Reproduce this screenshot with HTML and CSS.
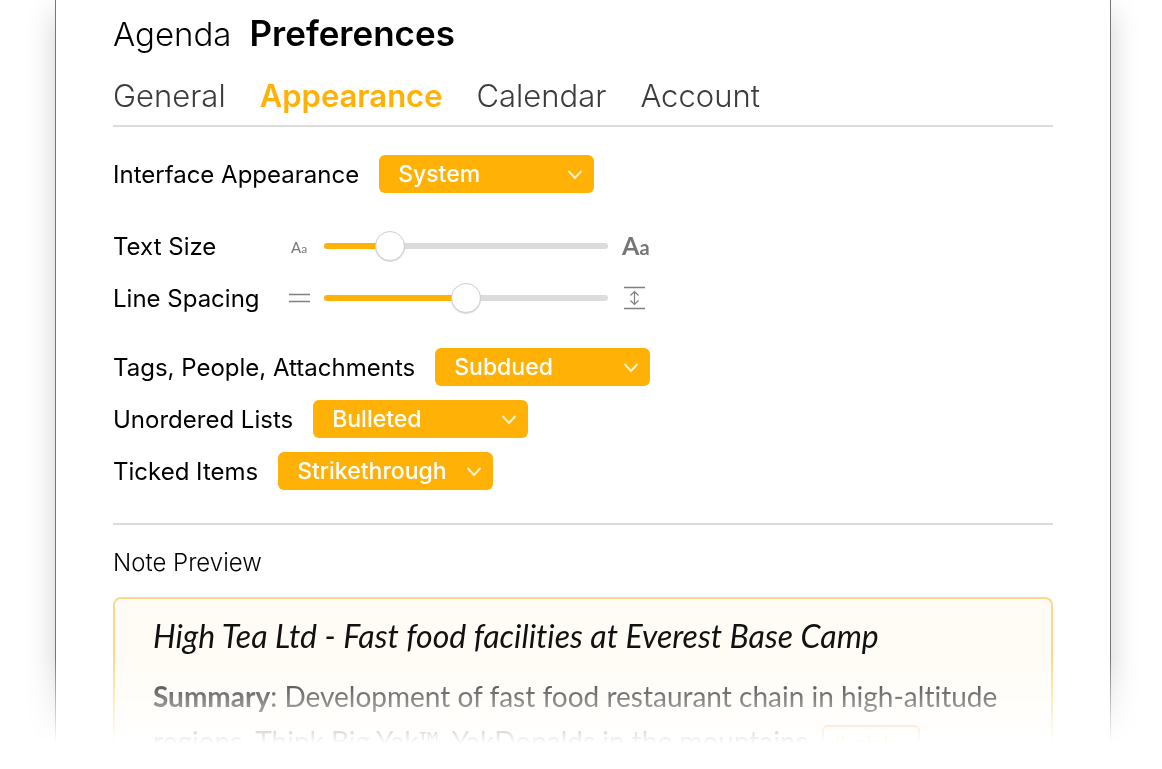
FILE: index.html
```html
<!DOCTYPE html>
<html lang="en">
<head>
<meta charset="utf-8">
<title>Agenda Preferences</title>
<link rel="stylesheet" href="styles.css">
</head>
<body>
<div class="stage">
  <main class="window">
    <h1 class="title"><span class="title-app">Agenda</span> <span class="title-page">Preferences</span></h1>
    <nav class="tabs">
      <a class="tab" href="#general">General</a>
      <a class="tab tab-active" href="#appearance" aria-current="page">Appearance</a>
      <a class="tab" href="#calendar">Calendar</a>
      <a class="tab" href="#account">Account</a>
    </nav>

    <form class="settings">
      <div class="group">
        <div class="row">
          <label for="interface">Interface Appearance</label>
          <span class="picker">
            <select id="interface"><option>System</option><option>Light</option><option>Dark</option></select>
            <svg class="chevron" viewBox="0 0 16 10" aria-hidden="true"><path d="M2 1.5 8 8l6-6.5"/></svg>
          </span>
        </div>
      </div>

      <div class="group group-sliders">
        <div class="row slider-row">
          <label for="size">Text Size</label>
          <span class="hint hint-small" aria-hidden="true"><span class="cap">A</span>a</span>
          <input id="size" type="range" min="0" max="100" value="20" style="--fill: 20%">
          <span class="hint hint-large" aria-hidden="true"><span class="cap">A</span>a</span>
        </div>
        <div class="row slider-row">
          <label for="spacing">Line Spacing</label>
          <svg class="icon" viewBox="0 0 22 26" aria-hidden="true"><path class="medium" d="M1 9.5h21M1 16.5h21"/></svg>
          <input id="spacing" type="range" min="0" max="100" value="50" style="--fill: 50%">
          <svg class="icon" viewBox="0 0 22 26" aria-hidden="true"><path class="thick" d="M2 2.5h21M2 23.5h21"/><path class="thin" d="M12.5 6.5v13M8.5 10.5l4-4 4 4M8.5 15.5l4 4 4-4"/></svg>
        </div>
      </div>

      <div class="group">
        <div class="row">
          <label for="tags">Tags, People, Attachments</label>
          <span class="picker">
            <select id="tags"><option>Subdued</option><option>Vivid</option></select>
            <svg class="chevron" viewBox="0 0 16 10" aria-hidden="true"><path d="M2 1.5 8 8l6-6.5"/></svg>
          </span>
        </div>
        <div class="row">
          <label for="lists">Unordered Lists</label>
          <span class="picker">
            <select id="lists"><option>Bulleted</option><option>Dashed</option></select>
            <svg class="chevron" viewBox="0 0 16 10" aria-hidden="true"><path d="M2 1.5 8 8l6-6.5"/></svg>
          </span>
        </div>
        <div class="row">
          <label for="ticked">Ticked Items</label>
          <span class="picker">
            <select id="ticked"><option>Strikethrough</option><option>Plain</option></select>
            <svg class="chevron" viewBox="0 0 16 10" aria-hidden="true"><path d="M2 1.5 8 8l6-6.5"/></svg>
          </span>
        </div>
      </div>
    </form>

    <section class="preview">
      <h2 class="preview-label">Note Preview</h2>
      <article class="note">
        <h3 class="note-title">High Tea Ltd - Fast food facilities at Everest Base Camp</h3>
        <p class="note-text"><strong>Summary</strong>: Development of fast food restaurant chain in high-altitude regions. Think Big Yak™, YakDonalds in the mountains. <span class="tag"># niche</span></p>
      </article>
    </section>
  </main>
</div>
</body>
</html>
```
FILE: styles.css
```css
* { box-sizing: border-box; }

body {
  margin: 0;
  background: #fff;
  color: #000;
  font-family: Inter, "Liberation Sans", sans-serif;
}

/* The window fades out towards the bottom of the stage. */
.stage {
  padding: 0 51px 0 55px;
  overflow: hidden;
  -webkit-mask-image: linear-gradient(#000 calc(100% - 86px), transparent);
  mask-image: linear-gradient(#000 calc(100% - 86px), transparent);
}

.window {
  padding: 11px 57px 0;
  border: solid #777;
  border-width: 0 1px;
  background: #fff;
  box-shadow: 0 12px 28px rgba(0, 0, 0, 0.18);
}

.title {
  display: flex;
  align-items: baseline;
  gap: 18px;
  margin: 0;
  font-size: 35px;
  line-height: 44px;
}
.title-app {
  font-size: 33px;
  font-weight: 350;
}
.title-page { font-weight: 600; }

.tabs {
  display: flex;
  gap: 34px;
  margin-top: 16px;
  padding-bottom: 5px;
  border-bottom: 2px solid #dcdcdc;
  font-size: 31px;
  line-height: 48px;
}
.tab {
  color: #3c3c3c;
  font-weight: 350;
  text-decoration: none;
}
.tab-active {
  color: #ffb205;
  font-weight: 600;
}

.settings {
  display: flex;
  flex-direction: column;
  gap: 17px;
  padding: 21px 0 26px;
  border-bottom: 2px solid #dcdcdc;
  font-size: 24px;
}
.group-sliders { padding-top: 3px; }
.row {
  display: flex;
  align-items: center;
  gap: 20px;
  height: 52px;
}

.picker {
  position: relative;
  width: 215px;
}
.picker select {
  display: block;
  width: 100%;
  height: 38px;
  padding: 0 19px;
  border: 0;
  border-radius: 6px;
  appearance: none;
  background: #ffb205;
  color: #fff;
  font: 500 23px Inter, "Liberation Sans", sans-serif;
}
.chevron {
  position: absolute;
  top: 15px;
  right: 11px;
  width: 16px;
  height: 10px;
  fill: none;
  stroke: #fff;
  stroke-opacity: 0.8;
  stroke-width: 2;
  stroke-linecap: round;
  pointer-events: none;
}

.slider-row { gap: 14px; }
.slider-row label { width: 161px; }
.icon,
.hint {
  flex: none;
  width: 22px;
  color: #777;
}
.icon {
  height: 26px;
  overflow: visible;
  fill: none;
  stroke: #808080;
}
.thin { stroke-width: 1.2; }
.medium { stroke-width: 1.5; }
.thick { stroke-width: 1.6; }
.hint {
  font-family: Lato, sans-serif;
  white-space: nowrap;
}
.hint-small {
  padding: 4px 0 0 3px;
  font-size: 12px;
  line-height: 16px;
}
.hint-small .cap { font-size: 15px; }
.hint-large {
  font-size: 20px;
  line-height: 28px;
  font-weight: 700;
}
.hint-large .cap { font-size: 25px; }

input[type="range"] {
  flex: none;
  width: 284px;
  height: 32px;
  margin: 0;
  appearance: none;
  background: transparent;
}
input[type="range"]::-webkit-slider-runnable-track {
  height: 6px;
  border-radius: 3px;
  background: linear-gradient(to right, #ffb205 var(--fill), #dcdcdc var(--fill));
}
input[type="range"]::-webkit-slider-thumb {
  width: 30px;
  height: 30px;
  margin-top: -12px;
  border: 1px solid #cfcfcf;
  border-radius: 50%;
  appearance: none;
  background: #fff;
  box-shadow: 0 1px 1px rgba(0, 0, 0, 0.15);
}

.preview-label {
  margin: 20px 0 16px;
  font-size: 24px;
  font-weight: 350;
  line-height: 36px;
}
.note {
  max-height: 147px;
  padding: 17px 38px 0;
  overflow: hidden;
  border: 2px solid #ffd78c;
  border-bottom: 0;
  border-radius: 8px 8px 0 0;
  background: #fffcf5;
  color: #111;
  font-family: Lato, "Liberation Sans", sans-serif;
  font-variant-ligatures: none;
}
.note-title {
  margin: 0;
  font-size: 32px;
  font-style: italic;
  font-weight: 400;
  line-height: 40px;
}
.note-text {
  margin: 18px 0 0;
  font-size: 28px;
  line-height: 45px;
}
.tag {
  display: inline-block;
  padding: 0 9px;
  border: 2px solid #ff9f55;
  border-radius: 6px;
  color: #ff9f55;
  font-size: 24px;
  line-height: 32px;
}
```
